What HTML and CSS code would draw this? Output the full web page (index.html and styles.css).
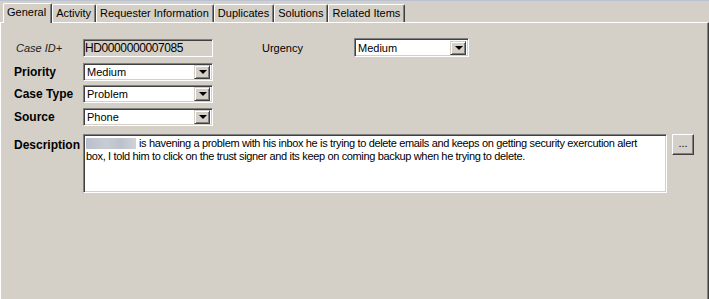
FILE: index.html
```html
<!DOCTYPE html>
<html lang="en">
    <head>
        <meta charset="UTF-8" />
        <title>Case</title>
        <link rel="stylesheet" href="styles.css">
    </head>
    <body>
        <div class="window">
            <div class="tabs">
                <div class="tab active">General</div>
                <div class="tab">Activity</div>
                <div class="tab">Requester Information</div>
                <div class="tab">Duplicates</div>
                <div class="tab">Solutions</div>
                <div class="tab">Related Items</div>
            </div>
            <div class="panel">
                <div class="row row-1">
                    <div class="label italic">Case ID+</div>
                    <div class="field readonly">HD0000000007085</div>
                    <div class="label urgency">Urgency</div>
                    <div class="field select wide">
                        <span class="value">Medium</span>
                        <span class="drop"><span class="arrow"></span></span>
                    </div>
                </div>
                <div class="row row-2">
                    <div class="label bold">Priority</div>
                    <div class="field select">
                        <span class="value">Medium</span>
                        <span class="drop"><span class="arrow"></span></span>
                    </div>
                </div>
                <div class="row row-3">
                    <div class="label bold">Case Type</div>
                    <div class="field select">
                        <span class="value">Problem</span>
                        <span class="drop"><span class="arrow"></span></span>
                    </div>
                </div>
                <div class="row row-4">
                    <div class="label bold">Source</div>
                    <div class="field select">
                        <span class="value">Phone</span>
                        <span class="drop"><span class="arrow"></span></span>
                    </div>
                </div>
                <div class="row row-5">
                    <div class="label bold desc-label">Description</div>
                    <div class="field memo">
                        <span class="blur"></span>is havening a problem with his inbox he is trying to delete emails and keeps on getting security exercution alert<br>box, I told him to click on the trust signer and its keep on coming backup when he trying to delete.
                    </div>
                    <div class="more-btn">...</div>
                </div>
            </div>
        </div>
    </body>
</html>
```

FILE: styles.css
```css
body {
    margin: 0;
    background: #d4d0c8;
    font-family: "Liberation Sans", Arial, sans-serif;
    font-size: 11px;
    color: #000;
}
.window {
    width: 709px;
    height: 299px;
    display: flex;
    flex-direction: column;
    border-top: 1px solid #b8c2d2;
    box-sizing: border-box;
}
.tabs {
    display: flex;
    align-items: flex-end;
    height: 21px;
    padding-left: 3px;
}
.tab {
    height: 17px;
    line-height: 16px;
    padding: 0 4px 0 3px;
    border-top: 1px solid #fff;
    border-left: 1px solid #fff;
    border-right: 1px solid #404040;
    box-shadow: inset -1px 0 #808080;
    border-radius: 2px 2px 0 0;
    white-space: nowrap;
}
.tab.active {
    height: 19px;
    line-height: 17px;
    padding: 0 5px 0 3px;
    margin-bottom: -1px;
    position: relative;
    background: #d4d0c8;
    z-index: 1;
}
.panel {
    flex: 1;
    border-top: 1px solid #fff;
    border-left: 1px solid #fff;
    border-right: 1px solid #404040;
    box-shadow: inset -1px 0 #808080;
    padding: 15px 0 0 13px;
}
.row {
    display: flex;
    align-items: center;
    height: 18px;
}
.row-1 { height: 19px; }
.row-2 { margin-top: 6px; }
.row-3 { margin-top: 4px; }
.row-4 { margin-top: 5px; }
.row-5 { margin-top: 8px; align-items: flex-start; height: auto; }
.label {
    width: 69px;
    flex-shrink: 0;
}
.italic {
    font-style: italic;
    padding-left: 2px;
    width: 67px;
    color: #202020;
}
.bold {
    font-weight: bold;
    font-size: 12px;
}
.urgency {
    margin-left: 49px;
    width: 92px;
}
.field {
    width: 130px;
    height: 18px;
    box-sizing: border-box;
    border-top: 1px solid #808080;
    border-left: 1px solid #808080;
    border-right: 1px solid #fff;
    border-bottom: 1px solid #fff;
    box-shadow: inset 1px 1px #404040, inset -1px -1px #d4d0c8;
    background: #fff;
    display: flex;
    align-items: center;
    padding-left: 2px;
}
.readonly {
    background: #d4d0c8;
    height: 18px;
    padding-left: 1px;
    font-size: 12px;
    letter-spacing: -0.4px;
}
.select {
    justify-content: space-between;
    padding: 2px;
}
.select .value {
    padding-left: 1px;
}
.wide {
    width: 115px;
    height: 19px;
}
.drop {
    width: 16px;
    height: 14px;
    box-sizing: border-box;
    background: #d4d0c8;
    border-top: 1px solid #d4d0c8;
    border-left: 1px solid #d4d0c8;
    border-right: 1px solid #404040;
    border-bottom: 1px solid #404040;
    box-shadow: inset 1px 1px #fff, inset -1px -1px #808080;
    display: flex;
    align-items: center;
    justify-content: center;
}
.arrow {
    width: 0;
    height: 0;
    border-left: 4px solid transparent;
    border-right: 4px solid transparent;
    border-top: 4px solid #000;
    margin-left: 1px;
}
.desc-label {
    padding-top: 4px;
}
.memo {
    width: 584px;
    height: 59px;
    display: block;
    padding: 2px 0 0 2px;
    line-height: 13px;
    white-space: nowrap;
    letter-spacing: -0.35px;
}
.blur {
    display: inline-block;
    width: 50px;
    height: 11px;
    vertical-align: -2px;
    margin-right: 3px;
    background: linear-gradient(90deg, #b8bfcc, #c8ccd4 40%, #bcc2cc 70%, #d0d2d8);
}
.more-btn {
    width: 22px;
    height: 21px;
    box-sizing: border-box;
    margin-left: 5px;
    border-top: 1px solid #fff;
    border-left: 1px solid #fff;
    border-right: 1px solid #404040;
    border-bottom: 1px solid #404040;
    box-shadow: inset -1px -1px #808080;
    text-align: center;
    line-height: 17px;
}
```
